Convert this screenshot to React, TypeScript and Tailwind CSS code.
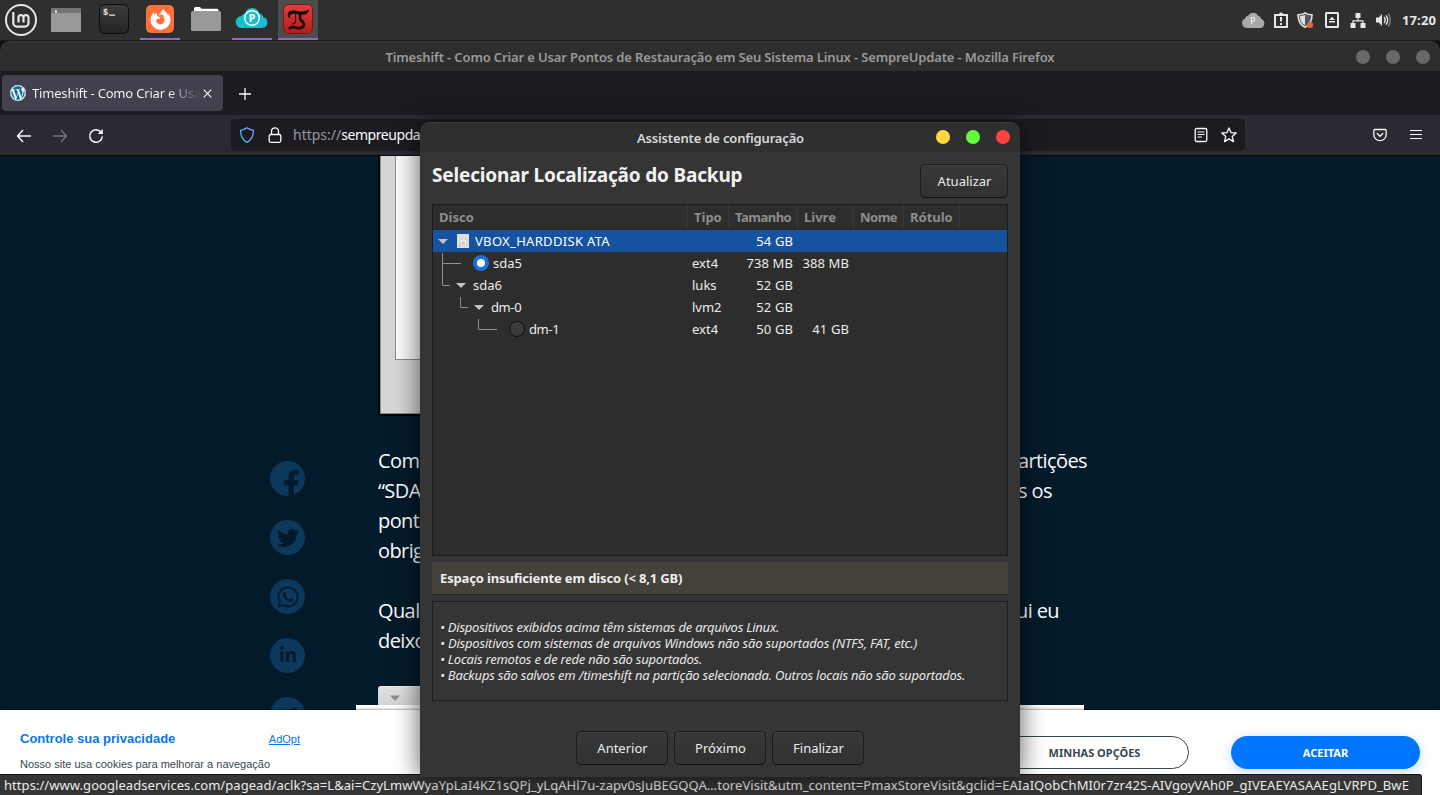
import type { ReactNode } from 'react';
import {
  FaFacebookF,
  FaFirefoxBrowser,
  FaLinkedinIn,
  FaTelegramPlane,
  FaTwitter,
  FaWhatsapp,
  FaWordpress,
} from 'react-icons/fa';

/* ---------- System panel ---------- */

function MintLogo() {
  return (
    <svg viewBox="0 0 40 40" className="size-10" fill="none" stroke="#e6e6e6" strokeLinecap="butt">
      <circle cx="21" cy="20" r="15" strokeWidth="2" />
      <path
        strokeWidth="2.2"
        d="M13.300 12v11a3.600 3.600 0 0 0 3.600 3.600h8a3.600 3.600 0 0 0 3.600-3.600v-5.400a2.500 2.500 0 0 0-5 0V22.600M23.500 17.600a2.500 2.500 0 0 0-5 0V22.600"
      />
    </svg>
  );
}

function WindowIcon() {
  return (
    <svg viewBox="0 0 40 40" className="size-10">
      <rect x="5" y="8" width="30" height="24" fill="#999" />
      <rect x="5" y="8" width="30" height="5" fill="#747474" />
      <rect x="9" y="10.5" width="2" height="2" fill="#fff" />
    </svg>
  );
}

function TerminalIcon() {
  return (
    <svg viewBox="0 0 40 40" className="size-10">
      <defs>
        <linearGradient id="term" x1="0" y1="0" x2="0" y2="1">
          <stop offset="0" stopColor="#3c3c3c" />
          <stop offset="1" stopColor="#242424" />
        </linearGradient>
      </defs>
      <rect x="5.500" y="4.500" width="29" height="29" rx="5" fill="url(#term)" stroke="#0c0c0c" />
      <text x="9" y="14.500" fill="#eee" fontSize="8.500" fontWeight="700" fontFamily="'Liberation Mono', monospace">
        $
      </text>
      <rect x="15" y="14.500" width="6" height="1.200" fill="#eee" />
    </svg>
  );
}

function FolderIcon() {
  return (
    <svg viewBox="0 0 40 40" className="size-10">
      <path d="M8 12V8.500Q8 7 9.500 7H14l1.500 1.800H31Q32.500 8.800 32.500 10.300V12z" fill="#fff" />
      <rect x="5" y="11" width="30" height="20" rx="1.500" fill="#999" />
    </svg>
  );
}

function CloudIcon() {
  return (
    <svg viewBox="0 0 40 40" className="size-10">
      <path
        d="M10 28a6 6 0 0 1-.6-12 5 5 0 0 1 3.400-2.600A8 8 0 0 1 20 8a8 8 0 0 1 7.400 5.300 5.600 5.600 0 0 1 3.800 3.700A5.600 5.600 0 0 1 30 28z"
        fill="#17bed0"
      />
      <circle cx="20" cy="18" r="7.300" fill="none" stroke="#fff" strokeWidth="1.400" />
      <text x="16.800" y="21.800" fill="#fff" fontSize="10.500" fontWeight="700" fontFamily="'Noto Sans', sans-serif">
        P
      </text>
    </svg>
  );
}

function TimeshiftIcon() {
  return (
    <svg viewBox="0 0 40 40" className="size-10">
      <defs>
        <linearGradient id="ts" x1="0" y1="0" x2="0" y2="1">
          <stop offset="0" stopColor="#e2403c" />
          <stop offset="1" stopColor="#b01c1e" />
        </linearGradient>
      </defs>
      <rect x="5.500" y="4.500" width="29" height="29" rx="5" fill="url(#ts)" stroke="#7c1517" />
      <path
        d="M11 18c-3-3.500-.5-8 4-7.500 4 .5 8 1.500 11 .8 2-.4 3.700-1 5.200-1.800-.8 4-3.700 5.800-7.700 5.200-4-.5-8.500-1.800-10.500-.2-1.500 1.200-1.500 2.300-.5 3.700z"
        fill="#1c0807"
      />
      <path d="M17.500 14v8.500l-3.500 1.800" fill="none" stroke="#1c0807" strokeWidth="1.200" />
      <path
        d="M21.200 13.500c2.300 2-.3 4.500 1.600 6.500s3.700 3 3 5.500c-.9 2.800-5 3.300-8 2.200-2.600-1-4.600-.8-7 1.300"
        fill="none"
        stroke="#1c0807"
        strokeWidth="2.600"
      />
    </svg>
  );
}

function Launcher({ children, running, active }: { children: ReactNode; running?: boolean; active?: boolean }) {
  return (
    <div className={active ? 'h-10 w-10 bg-[#4d4d4d]' : 'h-10 w-10'}>
      <div className="h-[38px] overflow-hidden">{children}</div>
      {running && <div className="h-0.5 bg-[#8f6ac8]" />}
    </div>
  );
}

function Tray() {
  return (
    <div className="flex h-10 items-center pr-1">
      <svg viewBox="0 0 24 18" className="mr-2 h-[18px] w-6">
        <path d="M5.500 17A5 5 0 0 1 4 7.500 4 4 0 0 1 7.300 4.500 5.500 5.500 0 0 1 17 4.700a4.300 4.300 0 0 1 3.300 3.200A4.700 4.700 0 0 1 19 17z" fill="#a9a9a9" />
        <text x="9.300" y="13" fill="#fff" fontSize="8.500" fontFamily="'Noto Sans', sans-serif">
          P
        </text>
      </svg>
      <svg viewBox="0 0 16 16" className="mr-2 size-4" fill="#e6e6e6">
        <path d="M1 2h4.500L8 .2 10.500 2H15v14H1zm2 2v10h10V4z" fillRule="evenodd" />
        <path d="M7 5h2v4.500H7zM7 11h2v2H7z" />
      </svg>
      <svg viewBox="0 0 18 16" className="mr-[10px] h-4 w-[18px]">
        <path d="M8 .8c2 1.400 4.300 2 7 2 0 6-1.800 10-7 12.400C2.800 12.800 1 8.800 1 2.800c2.700 0 5-.6 7-2z" fill="#555" stroke="#e0e0e0" strokeWidth="1.600" />
        <path d="M8 2.800v10.400C4.500 11.500 3 8.500 2.800 4.200 5 4 6.500 3.600 8 2.800z" fill="#e0e0e0" />
        <circle cx="13" cy="13" r="3" fill="#e0703a" />
      </svg>
      <svg viewBox="0 0 14 16" className="mr-[11px] h-4 w-3.5" fill="#e6e6e6">
        <path d="M1.500 0h11A1.500 1.500 0 0 1 14 1.500v13a1.500 1.500 0 0 1-1.500 1.500h-11A1.500 1.500 0 0 1 0 14.500v-13A1.500 1.500 0 0 1 1.500 0zM2 2v12h10V2z" fillRule="evenodd" />
        <path d="M7 4.800l3 3.200H4zM4 9h6v1.500H4z" />
      </svg>
      <svg viewBox="0 0 16 16" className="mr-[10px] size-4" fill="#e6e6e6">
        <path d="M5.500 1h5v5h-5zM.5 11h5v5h-5zM10.500 11h5v5h-5z" />
        <path d="M8 6v2.800M3 11V8.800h10V11" fill="none" stroke="#e6e6e6" strokeWidth="1.200" />
      </svg>
      <svg viewBox="0 0 16 16" className="mr-[10px] size-4" fill="none">
        <path d="M0 5.500h2.800L6 2v12L2.800 10.500H0z" fill="#e6e6e6" />
        <path d="M8 5c1.300 1.700 1.300 4.300 0 6M10 3.300c2 2.800 2 6.600 0 9.400" stroke="#e6e6e6" strokeWidth="1.400" />
        <path d="M12.300 1.500c2.600 3.800 2.600 9.200 0 13" stroke="#7c7c7c" strokeWidth="1.400" />
      </svg>
      <span className="pt-0.5 text-[13px] font-bold tracking-[0.12px] text-[#e8e8e8]">17:20</span>
    </div>
  );
}

function Panel() {
  return (
    <header className="flex h-[41px] shrink-0 justify-between border-b border-[#1c1c1c] bg-[#2f2f2f]">
      <div className="flex h-10">
        <MintLogo />
        <div className="ml-1.5 flex gap-1.5">
          <Launcher>
            <WindowIcon />
          </Launcher>
          <div className="ml-0.5">
            <Launcher>
              <TerminalIcon />
            </Launcher>
          </div>
          <Launcher running>
            <div className="mx-auto mt-[5px] flex size-7 items-center justify-center rounded-[5px] bg-[#ff7139]">
              <FaFirefoxBrowser className="size-[21px] text-white" />
            </div>
          </Launcher>
          <Launcher>
            <FolderIcon />
          </Launcher>
          <Launcher running>
            <CloudIcon />
          </Launcher>
          <Launcher running active>
            <TimeshiftIcon />
          </Launcher>
        </div>
      </div>
      <Tray />
    </header>
  );
}

/* ---------- Browser chrome ---------- */

function WindowTitle() {
  return (
    <div className="h-[30px] shrink-0 bg-[#111]">
      <div className="grid h-[30px] grid-cols-[1fr_auto_1fr] items-center rounded-t-[10px] border-t border-[#3a3a3a] bg-[#2e2e2e]">
        <span />
        <h1 className="pt-0.5 text-[13px] font-semibold tracking-[-0.142px] whitespace-nowrap text-[#9a9a9a]">
          Timeshift - Como Criar e Usar Pontos de Restauração em Seu Sistema Linux - SempreUpdate - Mozilla Firefox
        </h1>
        <div className="flex justify-end gap-4 pr-[10px]">
          <span className="size-3.5 rounded-full bg-[#696969]" />
          <span className="size-3.5 rounded-full bg-[#696969]" />
          <span className="size-3.5 rounded-full bg-[#696969]" />
        </div>
      </div>
    </div>
  );
}

function TabStrip() {
  return (
    <div className="flex h-11 shrink-0 items-center bg-[#1c1b22] pl-0.5">
      <div className="flex h-9 w-[221px] items-center rounded bg-[#42414d] pr-2.5 pl-2">
        <FaWordpress className="size-4 shrink-0 rounded-full bg-white text-[#0a6f9e]" />
        <span className="ml-[6px] w-[169px] overflow-hidden bg-linear-to-r from-[#fbfbfe] from-80% to-[#42414d] bg-clip-text pt-0.5 text-[13px] tracking-[-0.18px] whitespace-nowrap text-transparent">
          Timeshift - Como Criar e Usa
        </span>
        <svg viewBox="0 0 10 10" className="ml-0.5 size-[9px] shrink-0" stroke="#fbfbfe" strokeWidth="1.200">
          <path d="M.8.8l8.400 8.400M9.200.8L.8 9.200" />
        </svg>
      </div>
      <svg viewBox="0 0 12 12" className="mt-0.5 ml-[16px] size-3" stroke="#fbfbfe" strokeWidth="1.300">
        <path d="M6 0v12M0 6h12" />
      </svg>
    </div>
  );
}

function Toolbar() {
  return (
    <div className="flex h-[41px] shrink-0 items-center border-b border-[#0c0c0d] bg-[#2b2a33] text-[#fbfbfe]">
      <div className="flex w-[231px] items-center pt-px pl-4">
        <svg viewBox="0 0 16 16" className="size-4" fill="none" stroke="currentColor" strokeWidth="1.400">
          <path d="M7 2L1.500 8 7 14M1.500 8H15" strokeLinejoin="round" />
        </svg>
        <svg viewBox="0 0 16 16" className="ml-5 size-4 text-[#75747c]" fill="none" stroke="currentColor" strokeWidth="1.400">
          <path d="M9 2l5.500 6L9 14M14.500 8H1" strokeLinejoin="round" />
        </svg>
        <svg viewBox="0 0 16 16" className="ml-5 size-4" fill="none" stroke="currentColor" strokeWidth="1.500">
          <path d="M13.300 4.500A6.300 6.300 0 1 0 14.300 8.500" />
          <path d="M14.800 1v5H9.800z" fill="currentColor" stroke="none" />
        </svg>
      </div>
      <div className="flex h-8 w-[1014px] items-center rounded bg-[#1c1b22] pr-2 pl-2">
        <svg viewBox="0 0 16 16" className="size-4" fill="none" strokeWidth="1.300">
          <defs>
            <linearGradient id="shield" x1="1" y1="0" x2="0" y2="1">
              <stop offset="0" stopColor="#b08cff" />
              <stop offset="0.5" stopColor="#4db4f0" />
              <stop offset="1" stopColor="#2cc9f5" />
            </linearGradient>
          </defs>
          <path d="M8 .8c2 1.500 4 2.200 6.500 2.500 0 5.500-1.700 9.500-6.500 12C3.200 12.800 1.500 8.800 1.500 3.300 4 3 6 2.300 8 .8z" stroke="url(#shield)" strokeLinejoin="round" />
        </svg>
        <svg viewBox="0 0 14 16" className="ml-[13px] h-4 w-3.5" fill="none" stroke="currentColor" strokeWidth="1.300">
          <rect x="1.200" y="7.500" width="11.600" height="7.800" rx="1.500" />
          <path d="M3.500 7.500V4.300a3.500 3.500 0 0 1 7 0v3.200" />
        </svg>
        <span className="ml-[11px] text-sm text-[#96969e]">https://</span>
        <span className="text-sm tracking-[-0.444px]">sempreupda</span>
        <svg viewBox="0 0 14 16" className="ml-auto h-4 w-3.5" fill="none" stroke="currentColor" strokeWidth="1.300">
          <rect x="1.200" y="1.500" width="11.600" height="13" rx="1.500" />
          <path d="M3.500 5h7M3.500 7.500h7M3.500 10h4.500" strokeWidth="1" />
        </svg>
        <svg viewBox="0 0 16 16" className="ml-[13px] size-4" fill="none" stroke="currentColor" strokeWidth="1.300" strokeLinejoin="round">
          <path d="M8 .9l2 4.700 5.200.4-4 3.400 1.300 5.200L8 11.900l-4.500 2.700 1.300-5.200-4-3.400 5.200-.4z" />
        </svg>
      </div>
      <div className="ml-auto flex items-center gap-[23px] pr-[18px]">
        <svg viewBox="0 0 14 14" className="size-3.5" fill="none" stroke="currentColor" strokeWidth="1.300" strokeLinecap="round" strokeLinejoin="round">
          <path d="M1.800 1.500h10.400q1 0 1 1V6.500a6.200 6.200 0 0 1-12.400 0V2.500q0-1 1-1z" />
          <path d="M4.200 5.500L7 8.200l2.800-2.700" />
        </svg>
        <svg viewBox="0 0 12 12" className="h-3 w-3" stroke="currentColor" strokeWidth="1.200">
          <path d="M0 1.500h12M0 5.500h12M0 9.500h12" />
        </svg>
      </div>
    </div>
  );
}

/* ---------- Article behind the dialog ---------- */

function Share({ children }: { children: ReactNode }) {
  return (
    <span className="flex size-[35px] shrink-0 items-center justify-center overflow-hidden rounded-full bg-[#0c385b] text-[#04192a]">
      {children}
    </span>
  );
}

function Line({ left, right }: { left: string; right?: ReactNode }) {
  return (
    <div className="grid h-[30px] grid-cols-[640px_auto] items-center justify-start">
      <span>{left}</span>
      <span>{right}</span>
    </div>
  );
}

function Article() {
  return (
    <main className="flex h-[554px] shrink-0 overflow-hidden bg-[#031a2a]">
      <aside className="ml-[270px] flex w-[108px] shrink-0 flex-col gap-6 pt-[305px]">
        <Share>
          <FaFacebookF className="ml-2 size-[27px] shrink-0 translate-y-[5px]" />
        </Share>
        <Share>
          <FaTwitter className="size-[22px]" />
        </Share>
        <Share>
          <FaWhatsapp className="size-6" />
        </Share>
        <Share>
          <FaLinkedinIn className="mb-0.5 size-[18px]" />
        </Share>
        <Share>
          <FaTelegramPlane className="size-5" />
        </Share>
      </aside>
      <div className="flex w-[710px] flex-col">
        <div className="h-[260px] w-[630px] shrink-0 border-b-2 border-l-2 border-black bg-[#d6d6d6]">
          <div className="h-[258px] border-b border-l border-[#8d8d8d] pl-3.5">
            <div className="h-[204px] w-[600px] border-b border-l border-[#8a8a8a] bg-[#fafafa]" />
          </div>
        </div>
        <div className="mt-[30px] font-['Open_Sans',sans-serif] text-xl tracking-[-0.6px] whitespace-nowrap text-white">
          <Line left="Como" right="artições" />
          <Line left="“SDA" right="s os" />
          <Line left="ponto" />
          <Line left="obrig" />
          <Line left="" />
          <Line left="Qual" right={<span className="-ml-0.5">ui eu</span>} />
          <Line left="deixo" />
        </div>
        <div className="mt-[30px] h-[19px] w-[640px] shrink-0 rounded-t-[3px] border-t border-[#eee] bg-linear-to-b from-[#e2e2e2] to-[#d2d2d2] pt-2 pl-3">
          <svg viewBox="0 0 10 6" className="h-1.5 w-2.5">
            <path d="M0 .5h10L5 6z" fill="#8c8c8c" />
          </svg>
        </div>
        <div className="-ml-[22px] h-[5px] w-[728px] shrink-0 bg-white" />
      </div>
    </main>
  );
}

function CookieBanner() {
  return (
    <section className="flex h-[85px] shrink-0 justify-between bg-white font-['Liberation_Sans',Arial,sans-serif] shadow-[0_0_3px_rgba(0,0,0,0.6)]">
      <div className="w-[300px] pt-[19px] pl-5">
        <div className="flex items-center justify-between">
          <h2 className="text-[13px] leading-5 font-bold text-[#0a75f5]">Controle sua privacidade</h2>
          <a className="text-[11px] leading-5 text-[#0a75f5] underline">AdOpt</a>
        </div>
        <p className="mt-[5px] text-[11px] leading-5 whitespace-nowrap text-[#37474f]">
          Nosso site usa cookies para melhorar a navegação
        </p>
      </div>
      <div className="flex gap-[42px] pt-[26px] pr-5 font-['Noto_Sans',sans-serif] text-[11px] font-bold">
        <button className="h-[33px] w-[189px] rounded-full border border-[#37474f] pt-0.5 text-[#37474f]">MINHAS OPÇÕES</button>
        <button className="h-[33px] w-[189px] rounded-full bg-[#0075ff] pt-0.5 text-white shadow-[0_3px_12px_rgba(0,117,255,0.25)]">
          ACEITAR
        </button>
      </div>
    </section>
  );
}

/* ---------- Setup dialog ---------- */

function DialogButton({ children, wide }: { children: ReactNode; wide?: boolean }) {
  return (
    <button
      className={
        (wide ? 'w-[92px]' : 'w-[88px]') +
        ' h-[34px] rounded-[5px] border border-[#1b1b1b] border-b-[#101010] bg-linear-to-b from-[#383838] to-[#313131] pt-0.5 pl-px text-[13px] text-[#ececec] shadow-[inset_0_1px_0_rgba(255,255,255,0.03)]'
      }
    >
      {children}
    </button>
  );
}

function Radio({ checked }: { checked?: boolean }) {
  return checked ? (
    <span className="flex size-4 items-center justify-center rounded-full bg-[#1c6fdb]">
      <span className="size-2 rounded-full bg-white" />
    </span>
  ) : (
    <span className="size-4 rounded-full border border-[#0f0f0f] bg-[#3b3b3b]" />
  );
}

function Branch({ width, lines, arrow }: { width: string; lines?: string; arrow?: string }) {
  return (
    <svg className={width + ' h-[22px] shrink-0'} fill="none">
      {lines && <path d={lines} stroke="#8f8f8f" />}
      {arrow && <path d={arrow} fill="#c4c4c4" />}
    </svg>
  );
}

function DiskIcon() {
  return (
    <svg viewBox="0 0 12 14" className="mr-1.5 h-3.5 w-3">
      <rect width="12" height="14" fill="#dedede" />
      <circle cx="6.500" cy="8.500" r="3.800" fill="#f2f2f2" stroke="#b5b5b5" strokeWidth=".6" />
      <circle cx="6.500" cy="9" r="1.400" fill="#d0d0d0" stroke="#aaa" strokeWidth=".5" />
      <path d="M1.500 13L5 8.500" stroke="#aaa" strokeWidth=".8" />
    </svg>
  );
}

type RowProps = { label: ReactNode; type?: string; size: string; free?: string; selected?: boolean };

function Row({ label, type, size, free, selected }: RowProps) {
  return (
    <div
      className={
        (selected ? 'bg-[#1553a0] text-white' : 'text-[#ececec]') +
        ' grid h-[22px] grid-cols-[255px_41px_69px_56px_1fr] items-center text-[13px] whitespace-nowrap'
      }
    >
      <span className="flex items-center">{label}</span>
      <span className="pt-0.5 pl-1">{type}</span>
      <span className="pt-0.5 pr-[5px] text-right tracking-[0.1px]">{size}</span>
      <span className="pt-0.5 pr-[5px] text-right tracking-[0.1px]">{free}</span>
    </div>
  );
}

function DiskTable() {
  const cell = 'flex items-center border-r border-[#383838] pt-0.5 pl-1.5';
  return (
    <div className="h-[352px] border border-[#1a1a1a] bg-[#2d2d2d]">
      <div className="grid h-[25px] grid-cols-[255px_41px_69px_56px_50px_56px] border-b border-[#262626] text-[13px] font-bold text-[#8d8d8d]">
        <span className={cell}>Disco</span>
        <span className={cell}>Tipo</span>
        <span className={cell + ' tracking-[-0.5px]'}>Tamanho</span>
        <span className={cell}>Livre</span>
        <span className={cell + ' tracking-[-0.5px]'}>Nome</span>
        <span className={cell}>Rótulo</span>
      </div>
      <Row
        selected
        size="54 GB"
        label={
          <>
            <Branch width="w-6" arrow="M5 9h10l-5 5z" />
            <DiskIcon />
            <span className="pt-0.5 tracking-[0.32px]">VBOX_HARDDISK ATA</span>
          </>
        }
      />
      <Row
        type="ext4"
        size="738 MB"
        free="388 MB"
        label={
          <>
            <Branch width="w-10" lines="M9.500 1v21M9.500 11.500H28" />
            <Radio checked />
            <span className="ml-1 pt-0.5">sda5</span>
          </>
        }
      />
      <Row
        type="luks"
        size="52 GB"
        label={
          <>
            <Branch width="w-10" lines="M9.500 0v11.500H17" arrow="M23 9h10l-5 5z" />
            <span className="pt-0.5">sda6</span>
          </>
        }
      />
      <Row
        type="lvm2"
        size="52 GB"
        label={
          <>
            <Branch width="w-[58px]" lines="M27.500 1v10.500H35" arrow="M41 9h10l-5 5z" />
            <span className="pt-0.5 tracking-[-0.4px]">dm-0</span>
          </>
        }
      />
      <Row
        type="ext4"
        size="50 GB"
        free="41 GB"
        label={
          <>
            <Branch width="w-[76px]" lines="M45.500 1v10.500H64" />
            <Radio />
            <span className="ml-1 pt-0.5 tracking-[-0.4px]">dm-1</span>
          </>
        }
      />
    </div>
  );
}

function SetupDialog() {
  return (
    <div className="absolute top-[122px] left-[420px] z-20 flex h-[655px] w-[600px] flex-col rounded-t-[10px] bg-[#353535] shadow-[0_1px_26px_rgba(0,0,0,0.65)]">
      <div className="grid h-[30px] shrink-0 grid-cols-[1fr_auto_1fr] items-center rounded-t-[10px] border-t border-[#3c3c3c] bg-[#2f2f2f]">
        <span />
        <h2 className="pt-0.5 pl-px text-[13px] font-semibold tracking-[-0.16px] text-[#d8d8d8]">Assistente de configuração</h2>
        <div className="-mt-px flex justify-end gap-4 pr-2.5">
          <span className="size-3.5 rounded-full bg-[#ffd93b]" />
          <span className="size-3.5 rounded-full bg-[#62ff3f]" />
          <span className="size-3.5 rounded-full bg-[#ff4340]" />
        </div>
      </div>
      <div className="flex flex-1 flex-col px-3 pt-3">
        <div className="mb-1.5 flex justify-between">
          <h3 className="text-[19px] leading-[22px] font-bold tracking-[-0.17px] text-[#f2f2f2]">
            Selecionar Localização do Backup
          </h3>
          <DialogButton>Atualizar</DialogButton>
        </div>
        <DiskTable />
        <p className="mt-1.5 flex h-[33px] items-center border-b border-[#242424] bg-[#45413b] pt-px pl-2 text-[13px] font-bold tracking-[-0.15px] text-[#efefef]">
          Espaço insuficiente em disco (&lt; 8,1 GB)
        </p>
        <div className="mt-1.5 h-[100px] border border-[#1b1b1b] pt-[17px] pl-[7px] text-[13px] leading-4 tracking-[-0.2px] whitespace-nowrap text-[#e8e8e8] italic">
          <p className="tracking-[-0.225px]">• Dispositivos exibidos acima têm sistemas de arquivos Linux.</p>
          <p className="tracking-[-0.18px]">
            • Dispositivos com sistemas de arquivos Windows não são suportados (NTFS, FAT, etc.)
          </p>
          <p className="tracking-[-0.22px]">• Locais remotos e de rede não são suportados.</p>
          <p>• Backups são salvos em /timeshift na partição selecionada. Outros locais não são suportados.</p>
        </div>
        <div className="mt-[30px] flex justify-center gap-1.5">
          <DialogButton wide>Anterior</DialogButton>
          <DialogButton wide>Próximo</DialogButton>
          <DialogButton wide>Finalizar</DialogButton>
        </div>
      </div>
    </div>
  );
}

export default function App() {
  return (
    <div className="relative flex h-[795px] w-[1440px] flex-col overflow-hidden bg-[#031a2a] font-['Noto_Sans',sans-serif]">
      <Panel />
      <WindowTitle />
      <TabStrip />
      <Toolbar />
      <Article />
      <CookieBanner />
      <div className="absolute bottom-0 left-0 z-10 flex h-[21px] w-[1422px] items-center rounded-tr-[3px] border-t border-r border-[#141414] bg-[#353535] pt-px pl-1 text-[13px] tracking-[0.057px] whitespace-nowrap text-[#ebebeb]">
        https://www.googleadservices.com/pagead/aclk?sa=L&amp;ai=CzyLmwWyaYpLaI4KZ1sQPj_yLqAHl7u-zapv0sJuBEGQQA…toreVisit&amp;utm_content=PmaxStoreVisit&amp;gclid=EAIaIQobChMI0r7zr42S-AIVgoyVAh0P_gIVEAEYASAAEgLVRPD_BwE
      </div>
      <SetupDialog />
    </div>
  );
}
